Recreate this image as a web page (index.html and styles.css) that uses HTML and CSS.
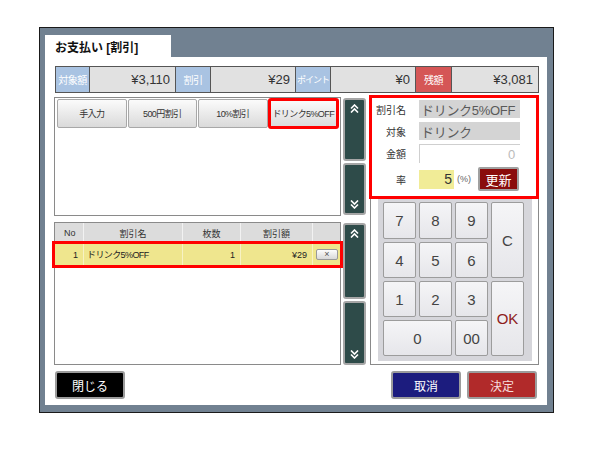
FILE: index.html
```html
<!DOCTYPE html>
<html lang="ja">
<head>
<meta charset="utf-8">
<title>お支払い [割引]</title>
<link rel="stylesheet" href="styles.css">
</head>
<body>
<div class="frame">
  <div class="tab">お支払い [割引]</div>
  <div class="panel">
    <div class="summary">
      <div class="s-label">対象額</div><div class="s-val">¥3,110</div>
      <div class="s-label">割引</div><div class="s-val">¥29</div>
      <div class="s-label narrow">ポイント</div><div class="s-val">¥0</div>
      <div class="s-label red">残額</div><div class="s-val last">¥3,081</div>
    </div>
    <div class="main">
      <div class="left">
        <div class="btn-panel">
          <div class="btn-row">
            <div class="mbtn">手入力</div>
            <div class="mbtn">500円割引</div>
            <div class="mbtn">10%割引</div>
            <div class="mbtn sel">ドリンク5%OFF</div>
          </div>
        </div>
        <div class="table-panel">
          <div class="thead">
            <div class="th">No</div>
            <div class="th">割引名</div>
            <div class="th">枚数</div>
            <div class="th">割引額</div>
            <div class="th end"></div>
          </div>
          <div class="trow">
            <div class="td num">1</div>
            <div class="td name">ドリンク5%OFF</div>
            <div class="td num">1</div>
            <div class="td num">¥29</div>
            <div class="td end"><div class="xbtn">×</div></div>
          </div>
        </div>
      </div>
      <div class="scrolls">
        <div class="sbtn up h63"><svg class="chev" width="9" height="9" viewBox="0 0 9 9"><path d="M1 4.5L4.5 1 8 4.5M1 8.5L4.5 5 8 8.5" fill="none" stroke="#fff" stroke-width="1.6"/></svg></div>
        <div class="sbtn down h52"><svg class="chev" width="9" height="9" viewBox="0 0 9 9"><path d="M1 0.5L4.5 4 8 0.5M1 4.5L4.5 8 8 4.5" fill="none" stroke="#fff" stroke-width="1.6"/></svg></div>
        <div class="sbtn up h76 gapbig"><svg class="chev" width="9" height="9" viewBox="0 0 9 9"><path d="M1 4.5L4.5 1 8 4.5M1 8.5L4.5 5 8 8.5" fill="none" stroke="#fff" stroke-width="1.6"/></svg></div>
        <div class="sbtn down h64"><svg class="chev" width="9" height="9" viewBox="0 0 9 9"><path d="M1 0.5L4.5 4 8 0.5M1 4.5L4.5 8 8 4.5" fill="none" stroke="#fff" stroke-width="1.6"/></svg></div>
      </div>
      <div class="right">
        <div class="detail">
          <div class="drow r1">
            <div class="dlabel">割引名</div>
            <div class="dval">ドリンク5%OFF</div>
          </div>
          <div class="drow r2">
            <div class="dlabel">対象</div>
            <div class="dval">ドリンク</div>
          </div>
          <div class="drow r3">
            <div class="dlabel">金額</div>
            <div class="dval white">0</div>
          </div>
          <div class="drow r4">
            <div class="dlabel">率</div>
            <div class="rate">5</div>
            <div class="pct">(%)</div>
            <div class="upd">更新</div>
          </div>
        </div>
        <div class="numpad">
          <div class="key">7</div>
          <div class="key">8</div>
          <div class="key">9</div>
          <div class="key kc">C</div>
          <div class="key">4</div>
          <div class="key">5</div>
          <div class="key">6</div>
          <div class="key">1</div>
          <div class="key">2</div>
          <div class="key">3</div>
          <div class="key kok">OK</div>
          <div class="key k0">0</div>
          <div class="key">00</div>
        </div>
      </div>
    </div>
    <div class="footer">
      <div class="fbtn black">閉じる</div>
      <div class="fbtn navy">取消</div>
      <div class="fbtn crimson">決定</div>
    </div>
  </div>
</div>
</body>
</html>
```
FILE: styles.css
```css
* { box-sizing: border-box; }
body {
  margin: 0;
  background: #fff;
  font-family: "Liberation Sans", "Noto Sans CJK JP", sans-serif;
  color: #333;
}
.frame {
  margin: 27px 0 0 39px;
  width: 515px;
  height: 386px;
  border: 1px solid #1a1a1a;
  background: #718191;
  padding: 7px 6px 7px 5px;
  display: flex;
  flex-direction: column;
}
.tab {
  width: 126px;
  height: 22px;
  background: #fff;
  font-size: 12px;
  font-weight: bold;
  color: #111;
  padding: 6px 0 0 10px;
  line-height: 14px;
}
.panel {
  width: 502px;
  height: 348px;
  background: #fff;
  padding: 9px 8px 6px 9px;
  display: flex;
  flex-direction: column;
}
.summary {
  margin-left: 1px;
  width: 484px;
  height: 27px;
  border: 1px solid #555;
  display: grid;
  grid-template-columns: 34px 86px 35px 85px 35px 85px 36px 86px;
}
.s-label {
  background: #a9c3e2;
  color: #fff;
  font-size: 10px;
  display: flex;
  align-items: center;
  justify-content: center;
  border-right: 1px solid #555;
  letter-spacing: -0.5px;
  white-space: nowrap;
  overflow: hidden;
}
.s-label.narrow { font-size: 9px; letter-spacing: -1px; }
.s-label.red { background: #d55656; }
.s-val {
  background: #e1e1e1;
  font-size: 13px;
  color: #333;
  display: flex;
  align-items: center;
  justify-content: flex-end;
  padding-right: 5px;
  border-right: 1px solid #555;
}
.s-val.last { border-right: none; }
.main {
  margin-top: 3px;
  height: 269px;
  display: flex;
}
.left {
  width: 287px;
  padding-top: 1px;
  display: flex;
  flex-direction: column;
  gap: 6px;
}
.btn-panel {
  height: 119px;
  border: 1px solid #8a8a8a;
  padding: 1px 2px;
}
.btn-row {
  display: flex;
  gap: 1px;
}
.mbtn {
  flex: 1;
  height: 29px;
  border: 1px solid #a8a8a8;
  border-radius: 2px;
  background: linear-gradient(#fbfbfb, #dadada);
  font-size: 9px;
  color: #333;
  display: flex;
  align-items: center;
  justify-content: center;
  letter-spacing: -0.6px;
  white-space: nowrap;
}
.mbtn.sel {
  outline: 3px solid #f00;
  outline-offset: -2px;
}
.table-panel {
  height: 143px;
  border: 1px solid #8a8a8a;
}
.thead, .trow {
  display: grid;
  grid-template-columns: 29px 99px 58px 72px 27px;
}
.thead {
  height: 21px;
  background: #dcdcdc;
  border-bottom: 1px solid #f4f4f4;
}
.th {
  font-size: 9px;
  color: #333;
  display: flex;
  align-items: center;
  justify-content: center;
  border-right: 1px solid #f2f2f2;
}
.th:first-child { justify-content: flex-start; padding-left: 9px; }
.th.end { border-right: none; }
.trow {
  height: 21px;
  background: #efe68e;
  outline: 3px solid #f00;
}
.td {
  font-size: 9px;
  color: #222;
  display: flex;
  align-items: center;
  border-right: 1px solid #f7f2c4;
}
.td.num { justify-content: flex-end; padding-right: 5px; }
.td.name { padding-left: 3px; letter-spacing: -0.6px; }
.td.end { border-right: none; padding-left: 3px; }
.xbtn {
  width: 22px;
  height: 11px;
  border: 1px solid #999;
  border-radius: 2px;
  background: linear-gradient(#fdfdfd, #d8d8d8);
  font-size: 9px;
  line-height: 9px;
  text-align: center;
  color: #555;
}
.scrolls {
  margin-left: 2px;
  width: 23px;
  padding-top: 2px;
  display: flex;
  flex-direction: column;
  gap: 2px;
}
.sbtn {
  border: 2px solid #a6a6a6;
  border-radius: 3px;
  background: #2e4b49;
  display: flex;
  flex-direction: column;
  align-items: center;
}
.sbtn.up { justify-content: flex-start; padding-top: 4px; }
.sbtn.down { justify-content: flex-end; padding-bottom: 4px; }
.chev { display: block; }
.h63 { height: 63px; }
.h52 { height: 52px; }
.h76 { height: 76px; }
.h64 { height: 64px; }
.gapbig { margin-top: 6px; }
.right {
  margin-left: 4px;
  width: 169px;
  height: 269px;
  border: 1px solid #8a8a8a;
  display: flex;
  flex-direction: column;
}
.detail {
  margin: -2px -1px 0 -2px;
  height: 104px;
  border: 3px solid #f00;
  padding-top: 2px;
  display: flex;
  flex-direction: column;
}
.drow {
  display: flex;
  align-items: center;
}
.r1, .r2 { height: 18px; }
.r2 { margin-top: 4px; }
.r3 { height: 19px; margin-top: 4px; }
.r4 { height: 24px; margin-top: 4px; }
.dlabel {
  width: 34px;
  text-align: right;
  font-size: 10px;
  color: #333;
  flex: none;
}
.dval {
  margin-left: 13px;
  width: 101px;
  height: 100%;
  background: #d4d4d4;
  font-size: 13px;
  color: #5a5a5a;
  padding-left: 2px;
  display: flex;
  align-items: center;
  letter-spacing: -0.3px;
}
.dval.white {
  background: #fff;
  border-left: 1px solid #cfcfcf;
  border-top: 1px solid #cfcfcf;
  color: #bbb;
  justify-content: flex-end;
  padding-right: 5px;
}
.rate {
  margin-left: 13px;
  width: 35px;
  height: 19px;
  background: #f1ec97;
  font-size: 14px;
  color: #333;
  text-align: right;
  padding-right: 2px;
  line-height: 19px;
}
.pct {
  margin-left: 3px;
  font-size: 9px;
  color: #666;
}
.upd {
  margin-left: auto;
  margin-right: 17px;
  width: 41px;
  height: 24px;
  background: #8a0c0c;
  border: 2px solid #a0a0a0;
  border-radius: 2px;
  color: #fff;
  font-size: 13px;
  display: flex;
  align-items: center;
  justify-content: center;
}
.numpad {
  margin: 0 6px 3px 7px;
  flex: 1;
  background: #d6d6db;
  padding: 3px 0 0 5px;
  display: grid;
  grid-template-columns: repeat(4, 33px);
  grid-template-rows: 37px 36px 36px 36px;
  gap: 3px;
}
.key {
  background: linear-gradient(#f5f5f7, #e6e6ea);
  border: 1px solid #9c9c9c;
  border-radius: 2px;
  font-size: 15px;
  color: #444;
  display: flex;
  align-items: center;
  justify-content: center;
}
.kc { grid-column: 4; grid-row: 1 / span 2; }
.kok { grid-column: 4; grid-row: 3 / span 2; color: #8e1c1c; font-size: 15px; }
.k0 { grid-column: 1 / span 2; }
.footer {
  margin-top: 6px;
  height: 28px;
  display: flex;
}
.fbtn {
  width: 70px;
  height: 28px;
  border: 2px solid #9c9c9c;
  border-radius: 3px;
  color: #fff;
  font-size: 12px;
  display: flex;
  align-items: center;
  justify-content: center;
}
.black { background: #000; margin-left: 1px; }
.navy { background: #1c1c7e; margin-left: auto; }
.crimson { background: #b12a2a; margin-left: 6px; margin-right: 2px; color: #f6dede; }
```
